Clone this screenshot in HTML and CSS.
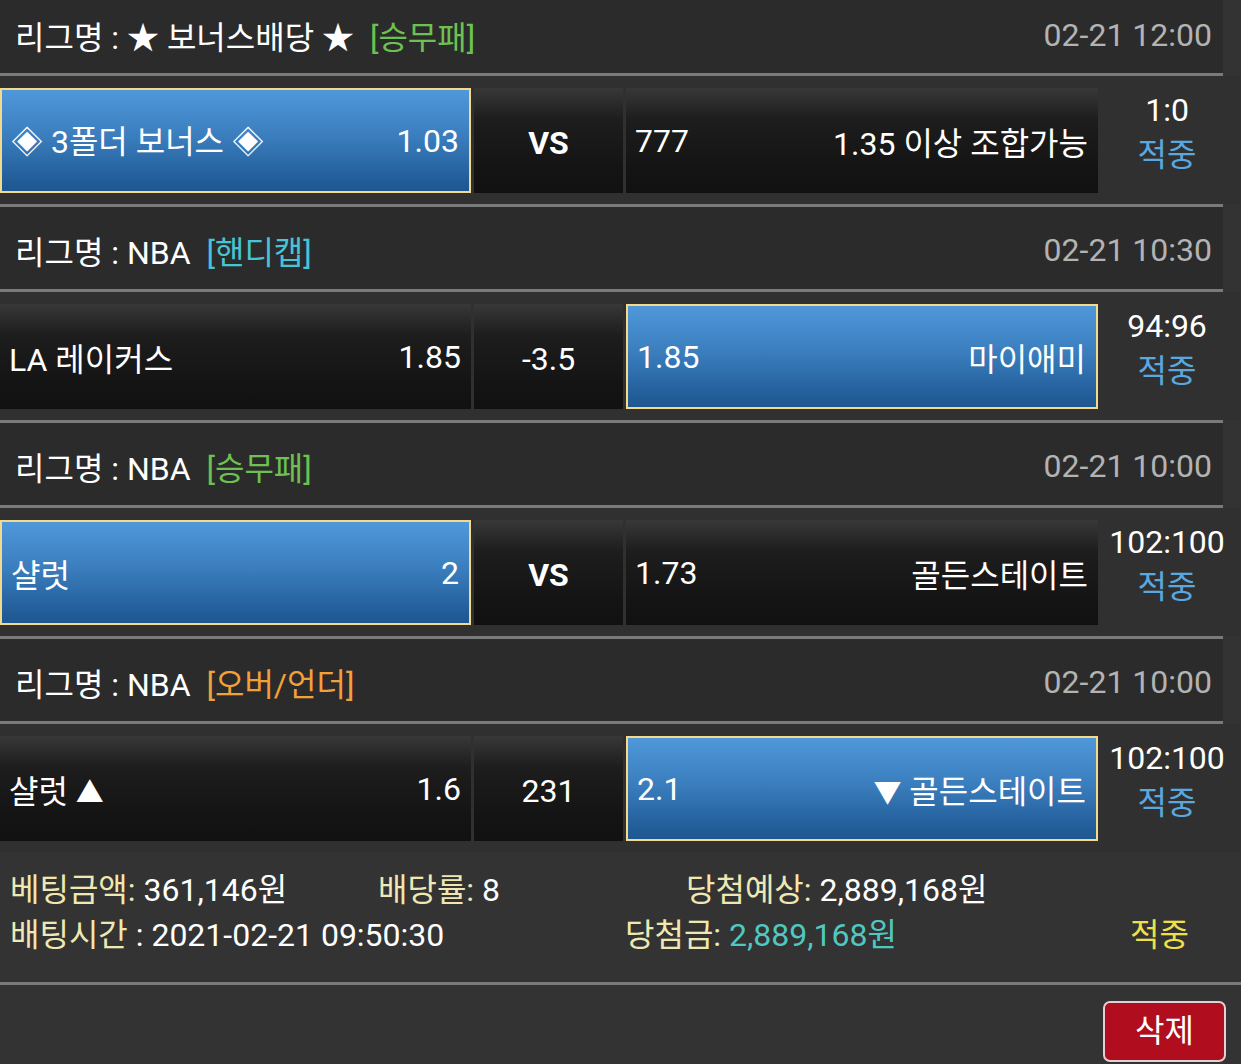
FILE: index.html
```html
<!DOCTYPE html>
<html lang="ko">
<head>
	<meta charset="UTF-8">
	<title>배팅내역</title>
	<link rel="stylesheet" href="styles.css">
</head>
<body>
	<div class="box">
		<div class="league first">
			<p>리그명 : ★ 보너스배당 ★ &nbsp;<span class="green">[승무패]</span></p>
			<p class="date">02-21 12:00</p>
		</div>
		<div class="match">
			<div class="cell team on"><span>◈ 3폴더 보너스 ◈</span><span>1.03</span></div>
			<div class="cell mid vs">VS</div>
			<div class="cell team"><span>777</span><span>1.35 이상 조합가능</span></div>
			<div class="result"><p>1:0</p><p class="hit">적중</p></div>
		</div>

		<div class="league">
			<p>리그명 : NBA &nbsp;<span class="cyan">[핸디캡]</span></p>
			<p class="date">02-21 10:30</p>
		</div>
		<div class="match">
			<div class="cell team"><span>LA 레이커스</span><span>1.85</span></div>
			<div class="cell mid">-3.5</div>
			<div class="cell team on"><span>1.85</span><span>마이애미</span></div>
			<div class="result"><p>94:96</p><p class="hit">적중</p></div>
		</div>

		<div class="league">
			<p>리그명 : NBA &nbsp;<span class="green">[승무패]</span></p>
			<p class="date">02-21 10:00</p>
		</div>
		<div class="match">
			<div class="cell team on"><span>샬럿</span><span>2</span></div>
			<div class="cell mid vs">VS</div>
			<div class="cell team"><span>1.73</span><span>골든스테이트</span></div>
			<div class="result"><p>102:100</p><p class="hit">적중</p></div>
		</div>

		<div class="league">
			<p>리그명 : NBA &nbsp;<span class="orange">[오버/언더]</span></p>
			<p class="date">02-21 10:00</p>
		</div>
		<div class="match">
			<div class="cell team"><span>샬럿 <i class="tri">▲</i></span><span>1.6</span></div>
			<div class="cell mid">231</div>
			<div class="cell team on"><span>2.1</span><span><i class="tri">▼</i> 골든스테이트</span></div>
			<div class="result"><p>102:100</p><p class="hit">적중</p></div>
		</div>
	</div>

	<div class="info">
		<div class="line l1">
			<p><span class="lb">베팅금액:</span> 361,146원</p>
			<p><span class="lb">배당률:</span> 8</p>
			<p><span class="lb">당첨예상:</span> 2,889,168원</p>
		</div>
		<div class="line l2">
			<p><span class="lb">배팅시간</span> : 2021-02-21 09:50:30</p>
			<p><span class="lb">당첨금:</span> <span class="win">2,889,168원</span></p>
			<p class="yellow">적중</p>
		</div>
	</div>
	<div class="btns">
		<a href="javascript:;" class="del">삭제</a>
	</div>
</body>
</html>
```

FILE: styles.css
```css
*{margin: 0;padding: 0;box-sizing: border-box;}
body{background: #333;color: #fff;font-family: Roboto, "Noto Sans CJK KR", sans-serif;font-size: 32px;}
a{text-decoration: none;}
i{font-style: normal;}

.league{width: 1223px;height: 88px;background: #2b2b2b;border-top: 3px solid #7a7a7a;border-bottom: 3px solid #7a7a7a;display: flex;align-items: center;justify-content: space-between;padding: 4px 11px 0 15px;}
.league.first{height: 76px;border-top: 0;padding: 0 11px 3px 15px;}
.date{color: #b3b3b3;}
.green{color: #6cc150;}
.cyan{color: #47c4d6;}
.orange{color: #f2a03a;}

.match{display: flex;gap: 3px;padding: 12px 0 11px;background: #303030;}
.cell{height: 105px;background: linear-gradient(#383838, #1d1d1d 30%, #141414 75%, #111);display: flex;align-items: center;}
.team{width: 471px;justify-content: space-between;padding: 0 10px 0 9px;}
.team + .mid + .team{width: 472px;}
.mid{width: 149px;justify-content: center;padding-top: 4px;}
.vs{font-weight: bold;}
.on{background: linear-gradient(#4f98da, #3b7ebe 45%, #24609c 85%, #1e5690);border: 2px solid #f2d98e;}
.tri{font-size: 28px;}

.result{width: 132px;height: 105px;display: flex;flex-direction: column;justify-content: center;align-items: center;line-height: 45px;padding-bottom: 15px;}
.hit{color: #5aa8df;}

.info{border-bottom: 3px solid #7a7a7a;padding: 12px 0 28px 10px;}
.line{display: flex;align-items: center;height: 45px;}
.l1 p:nth-child(1){width: 368px;}
.l1 p:nth-child(2){width: 308px;}
.l2 p:nth-child(1){width: 615px;}
.l2 p:nth-child(2){width: 505px;}
.lb{color: #f0e8b2;}
.win{color: #50c8c0;}
.yellow{color: #efe04a;}

.btns{display: flex;justify-content: flex-end;padding: 16px 15px 0 0;}
.del{width: 123px;height: 61px;line-height: 57px;text-align: center;color: #fff;background: #b00d1f;border: 2px solid #e6cfd0;border-radius: 7px;}
```
